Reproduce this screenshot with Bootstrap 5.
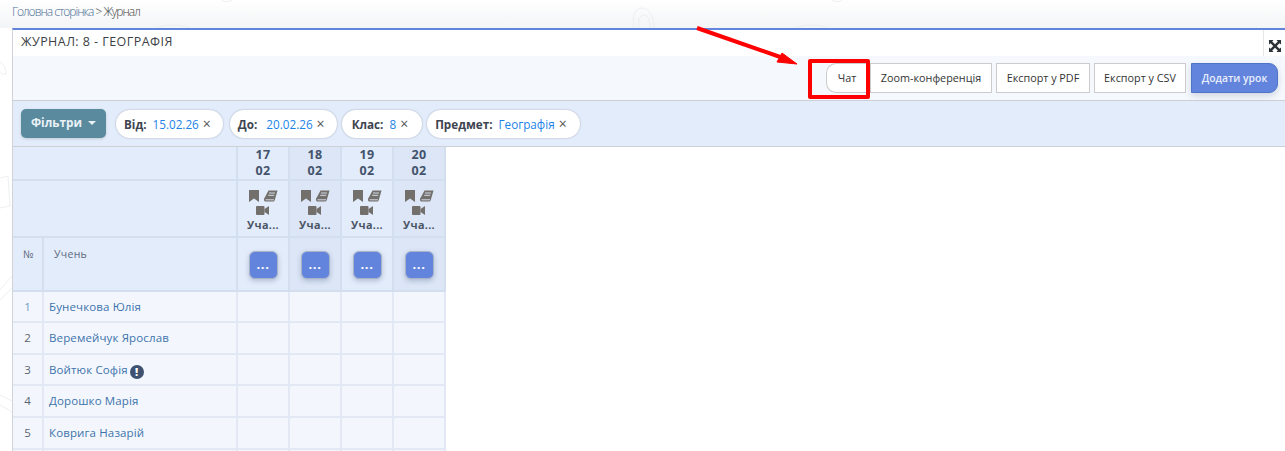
<!DOCTYPE html>
<html lang="uk"><head><meta charset="utf-8"><title>Журнал</title>
<link href="https://cdn.jsdelivr.net/npm/bootstrap@5.3.0/dist/css/bootstrap.min.css" rel="stylesheet">
<style>
html,body{height:451px;overflow:hidden}
body{font-family:"Open Sans","Noto Sans",sans-serif;background:linear-gradient(#fff 0,#f3f4f6 28px,#fff 28px);color:#3d4a5c;padding:0 0 0 12px;position:relative}
.crumbs{height:28px;padding-top:4px;font-size:12px;font-weight:300;letter-spacing:-1px;color:#444;line-height:16px}
.crumbs a{color:#4a6f96;text-decoration:none}
.panel{border-top:2px solid #6384dd;border-left:1px solid #d0d3d8;background:#fff}
.titlebar{height:26px;padding:3px 0 0 8px;font-size:12.5px;line-height:18px;color:#3b3f46;letter-spacing:.45px}
.expander{width:22px;border-left:1px solid #e5e7ea;padding-left:5px;padding-top:6px;margin-top:-3px;height:26px}
.toolbar{height:45px;background:#f5f8fc;border-bottom:1px solid #cdd0d4;padding:7px 7px 0 0}
.tool{height:30px;font-size:10.8px;line-height:1;padding:0;background:#fff;border:1px solid #ccc;border-radius:0;color:#333;white-space:nowrap}
.tool.chatbtn{border-radius:10px 0 0 10px;border-right-color:#fff;width:42px;margin-right:2px}
.tool.zoombtn{width:122px;margin-right:4px}
.tool.pdfbtn{width:94px;margin-right:4px}
.tool.csvbtn{width:92px;margin-right:5px}
.tool.addbtn{background:#6384dd;border-color:#4f74c7;color:#e8eefb;border-radius:0 9px 9px 0;font-weight:600;font-size:10.4px;box-shadow:0 3px 6px rgba(60,80,130,.2);width:87px}
.filterbar{height:46px;background:#e3ecfa;border-bottom:1px solid #cdd0d4;padding:8px 0 0 8px;gap:5px}
.filterbtn{height:29px;width:85px;background:#5a8a9e;color:#e9f1f5;font-weight:700;font-size:11.8px;border-radius:5px;padding:0 0 1px;border:0;margin-right:5px;box-shadow:0 1px 3px rgba(0,0,0,.15)}
.filterbtn::after{content:"";display:inline-block;margin-left:6px;vertical-align:2px;border-top:4px solid #e9f1f5;border-left:4px solid transparent;border-right:4px solid transparent}
.filterbtn:hover{background:#5a8a9e;color:#e9f1f5}
.chip{height:28px;background:#fff;border-radius:14px;font-size:11.7px;padding:0 12px 0 8px;box-shadow:0 0 2px rgba(60,70,90,.4);color:#1c84e8;white-space:nowrap;line-height:27px;margin-top:1px}
.chip.start{margin-right:2px}
.chip.klas{padding:0 14px 0 10px}
.chip.wide{padding-right:13px}
.chip b{color:#3d4450;margin-right:6px;font-weight:700}
.chip.upto b{margin-right:9px}
.chip i{font-style:normal;color:#555;margin-left:1px;font-size:14px}
.grid{border-collapse:separate;border-spacing:0;table-layout:fixed;width:433px;font-size:11px}
.grid td{padding:0;text-align:center;vertical-align:middle;border-right:2px solid #dde5f2;border-bottom:2px solid #dde5f2}
.grid .hd td{background:#e3ecfa;border-color:#d3dfef}
.grid .hd td.alt{background:#dce6f6}
.grid td.btncell{padding-top:1px}
.grid .bd td{background:#f3f7fd;border-color:#e3e9f4}
.grid .bd tr.endrow td{border-bottom:0}
.grid .bd td.nm{text-align:left;padding-left:5px;color:#3d73ab;font-size:11.5px;letter-spacing:.13px}
.grid .bd td.no{color:#5b6470;font-size:11.5px}
.grid .bd td.lnk{color:#6f9bc0}
.dt{font-weight:700;font-size:12.5px;line-height:16px;color:#43536c;letter-spacing:.3px}
.lbl{font-size:10.8px;font-weight:700;color:#4a5464;line-height:14px;letter-spacing:.3px}
.grid td.icell{vertical-align:top}
.ics{line-height:0;height:37px;padding-top:8px}
.grid td.stu{text-align:left;vertical-align:top;padding:9px 0 0 10px;color:#5d6a80;font-size:10.5px;letter-spacing:.3px}
.dots{display:inline-block;width:29px;height:28px;background:#6384dd;border-radius:6px;color:#fff;font-weight:700;font-size:13px;letter-spacing:.6px;line-height:24px;box-shadow:0 2px 5px rgba(60,80,130,.3);border:1px solid #a9b4c9}
.warn{display:inline-block;width:14px;height:14px;background:#3f5170;border-radius:50%;color:#fff;font-weight:800;font-size:11px;line-height:14px;text-align:center;vertical-align:-2px;margin-left:2px}
.redbox{position:absolute;left:808px;top:59px;width:62px;height:40px;border:4px solid #f00;border-radius:2px}
.overlay{position:absolute;left:0;top:0;pointer-events:none}
.filler{position:absolute;left:0;top:0;width:1285px;height:451px;z-index:-1}
</style></head><body>
<svg class="filler" viewBox="0 0 1285 451"><g fill="none" stroke="#eeeff1"><path d="M0 62c4 2 6 8 6 12-3 1-6-1-6-3"/><path d="M0 178l8-2 2 30-10 2"/><path d="M0 290l12-14M0 300l12-12M0 395l12 6M0 405l12 7"/><path d="M157 28c8-4 24-4 33 0M222 0c2 2 8 2 10 0M795 28c8-4 24-4 32 0M832 0c2 2 8 2 10 0"/><path d="M634 28c-2-10 0-20 8-20 7 0 12 8 12 20M639 28c-1-7 0-13 5-13 5 0 6 6 6 13"/></g></svg>
<div class="crumbs"><a href="#">Головна сторінка</a> &gt; Журнал</div>
<div class="panel">
  <div class="titlebar d-flex justify-content-between"><span>ЖУРНАЛ: 8 - ГЕОГРАФІЯ</span>
    <span class="expander"><svg width="12" height="12" viewBox="0 0 12 12" fill="#2d3138"><path d="M0 0h4.500L3.200 1.600 6 4.200 8.800 1.600 7.500 0H12v4.500L10.400 3.200 7.800 6l2.600 2.800L12 7.500V12H7.500l1.300-1.600L6 7.800l-2.800 2.600L4.500 12H0V7.500l1.600 1.300L4.200 6 1.600 3.200 0 4.500z"/></svg></span></div>
  <div class="toolbar d-flex justify-content-end align-items-start">
    <button class="btn tool chatbtn">Чат</button>
    <button class="btn tool zoombtn">Zoom-конференція</button>
    <button class="btn tool pdfbtn">Експорт у PDF</button>
    <button class="btn tool csvbtn">Експорт у CSV</button>
    <button class="btn tool addbtn">Додати урок</button>
  </div>
  <div class="filterbar d-flex align-items-start">
    <button class="btn filterbtn">Фільтри</button>
    <span class="chip start"><b>Від:</b>15.02.26 <i>×</i></span>
    <span class="chip upto"><b>До:</b>20.02.26 <i>×</i></span>
    <span class="chip klas"><b>Клас:</b>8 <i>×</i></span>
    <span class="chip wide"><b>Предмет:</b>Географія <i>×</i></span>
  </div>
  <table class="grid">
    <colgroup><col style="width:31px"><col style="width:194px"><col style="width:52px"><col style="width:52px"><col style="width:52px"><col style="width:52px"></colgroup>
    <tbody class="hd">
    <tr style="height:33px"><td colspan="2"></td>
      <td><div class="dt">17<br>02</div></td><td class="alt"><div class="dt">18<br>02</div></td><td><div class="dt">19<br>02</div></td><td class="alt"><div class="dt">20<br>02</div></td></tr>
    <tr style="height:57px"><td colspan="2"></td>
      <td class="icell"><div class="ics"><svg width="36" height="28" viewBox="0 0 36 28"><use href="#icn"/></svg></div><div class="lbl">Уча...</div></td>
      <td class="icell alt"><div class="ics"><svg width="36" height="28" viewBox="0 0 36 28"><use href="#icn"/></svg></div><div class="lbl">Уча...</div></td>
      <td class="icell"><div class="ics"><svg width="36" height="28" viewBox="0 0 36 28"><use href="#icn"/></svg></div><div class="lbl">Уча...</div></td>
      <td class="icell alt"><div class="ics"><svg width="36" height="28" viewBox="0 0 36 28"><use href="#icn"/></svg></div><div class="lbl">Уча...</div></td></tr>
    <tr style="height:54px"><td class="stu">№</td><td class="stu">Учень</td>
      <td class="btncell"><span class="dots">...</span></td><td class="btncell alt"><span class="dots">...</span></td><td class="btncell"><span class="dots">...</span></td><td class="btncell alt"><span class="dots">...</span></td></tr>
    </tbody>
    <tbody class="bd">
    <tr style="height:31px"><td class="no lnk">1</td><td class="nm">Бунечкова Юлія</td><td></td><td></td><td></td><td></td></tr>
    <tr style="height:32px"><td class="no">2</td><td class="nm">Веремейчук Ярослав</td><td></td><td></td><td></td><td></td></tr>
    <tr style="height:31px"><td class="no">3</td><td class="nm">Войтюк Софія<span class="warn">!</span></td><td></td><td></td><td></td><td></td></tr>
    <tr style="height:32px"><td class="no">4</td><td class="nm">Дорошко Марія</td><td></td><td></td><td></td><td></td></tr>
    <tr style="height:32px"><td class="no">5</td><td class="nm">Коврига Назарій</td><td></td><td></td><td></td><td></td></tr>
    <tr class="endrow" style="height:2px"><td></td><td></td><td></td><td></td><td></td><td></td></tr>
    </tbody>
  </table>
</div>
<div class="redbox"></div>
<svg class="overlay" width="1285" height="451"><path d="M697 28 L786 59" stroke="#f00" stroke-width="4" fill="none"/><path d="M797 64 L777 62 L782 53 Z" fill="#f00" stroke="#f00" stroke-width="1"/>
<defs><g id="icn" fill="#726f6d"><path d="M4 1h10v12l-5-3.500L4 13z"/><path d="M23.500 1.500h9l-2.700 9.500c-.3 1-1 1.600-2 1.600h-7.300c-1.500 0-1.800-1.700-1.300-3z"/><path d="M20.500 10.800h8.500M24 4h6M23.200 6.300h6" stroke="#dfe6f2" stroke-width=".9" fill="none"/><rect x="11" y="17" width="8.500" height="9" rx="1"/><path d="M19.500 20l4.500-3v9l-4.500-3z"/></g></defs></svg>
</body></html>
